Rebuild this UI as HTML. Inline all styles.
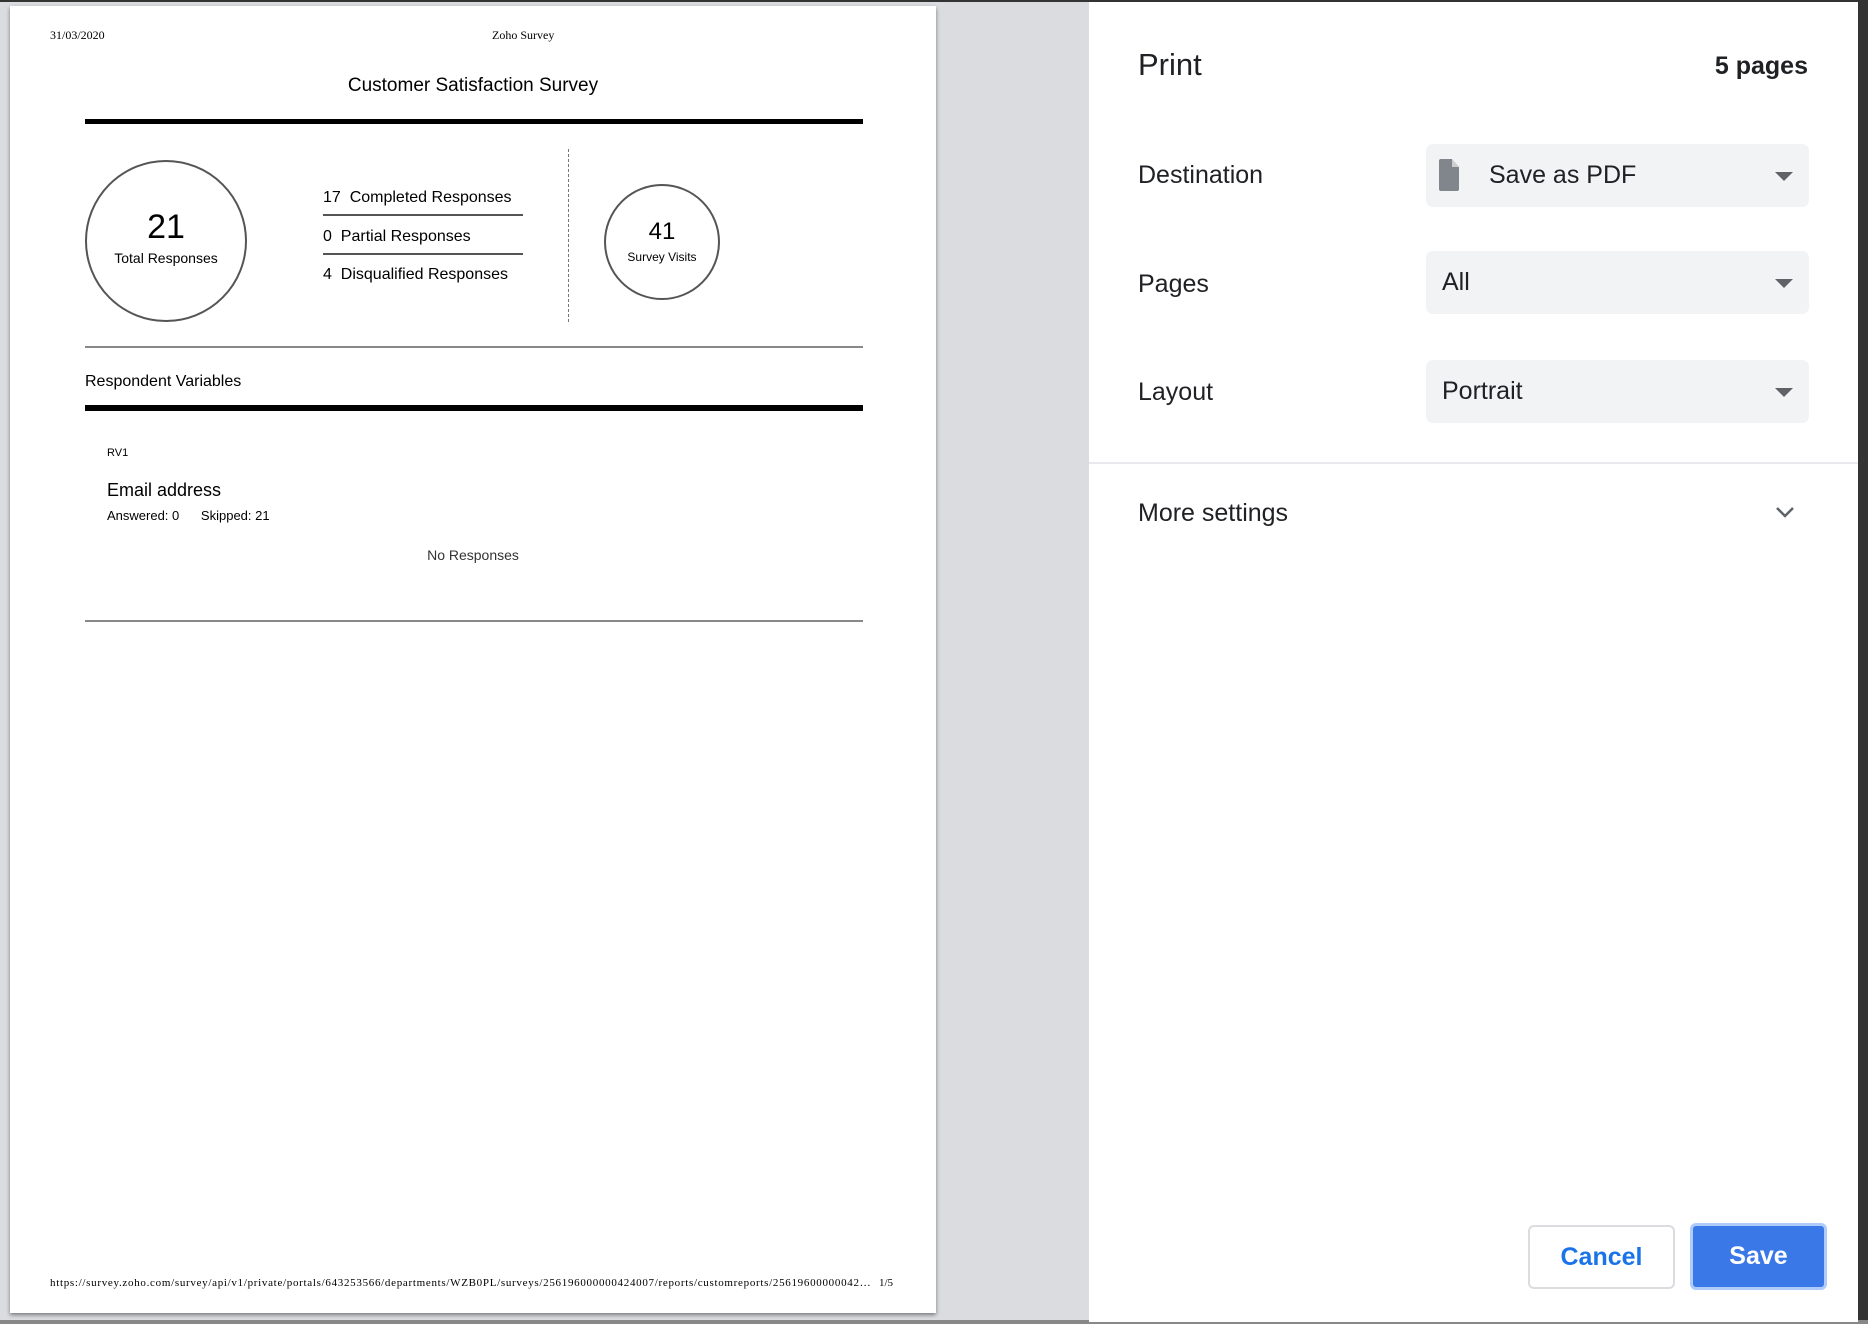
<!DOCTYPE html>
<html><head><meta charset="utf-8"><style>
*{margin:0;padding:0;box-sizing:border-box}
body{width:1868px;height:1324px;overflow:hidden;background:#dadce0;position:relative;font-family:"Liberation Sans",sans-serif}
.a{position:absolute;white-space:nowrap}
.page{position:absolute;left:10px;top:6px;width:926px;height:1307px;background:#fff;box-shadow:0 2px 4px rgba(0,0,0,.45)}
.serif{font-family:"Liberation Serif",serif}
.panel{position:absolute;left:1089px;top:2px;width:769px;height:1320px;background:#fff;color:#202124}
.lbl{font-size:25px;left:49px}
.sel{position:absolute;left:337px;width:383px;height:63px;background:#f1f3f4;border-radius:7px;font-size:25px}
.sel .t{position:absolute;top:17px}
.tri{position:absolute;right:16px;top:28px;width:0;height:0;border-left:9px solid transparent;border-right:9px solid transparent;border-top:9px solid #5f6368}
.circ{position:absolute;border:2px solid #555;border-radius:50%;text-align:center}
</style></head><body>
<div class="a" style="left:0;top:0;width:1868px;height:2px;background:#333"></div>
<div class="a" style="left:1858px;top:0;width:10px;height:1324px;background:#333"></div>
<div class="a" style="left:0;top:1320px;width:1868px;height:4px;background:#888"></div>
<div class="page">
 <div class="a serif" style="left:40px;top:22px;font-size:12px">31/03/2020</div>
 <div class="a serif" style="left:482px;top:22px;font-size:12px">Zoho Survey</div>
 <div class="a" style="left:0;width:926px;text-align:center;top:69px;font-size:19px">Customer Satisfaction Survey</div>
 <div class="a" style="left:75px;top:113px;width:778px;height:5px;background:#000"></div>
 <div class="circ" style="left:75px;top:154px;width:162px;height:162px"><div style="font-size:34px;margin-top:46px">21</div><div style="font-size:14px;margin-top:3px">Total Responses</div></div>
 <div class="a" style="left:313px;top:183px;font-size:16px">17&nbsp; Completed Responses</div>
 <div class="a" style="left:313px;top:208px;width:200px;height:2px;background:#555"></div>
 <div class="a" style="left:313px;top:222px;font-size:16px">0&nbsp; Partial Responses</div>
 <div class="a" style="left:313px;top:247px;width:200px;height:2px;background:#555"></div>
 <div class="a" style="left:313px;top:260px;font-size:16px">4&nbsp; Disqualified Responses</div>
 <div class="a" style="left:558px;top:143px;height:173px;border-left:1px dashed #777"></div>
 <div class="circ" style="left:594px;top:178px;width:116px;height:116px"><div style="font-size:24px;margin-top:32px">41</div><div style="font-size:12px;margin-top:4px">Survey Visits</div></div>
 <div class="a" style="left:75px;top:340px;width:778px;height:2px;background:#888"></div>
 <div class="a" style="left:75px;top:367px;font-size:16px">Respondent Variables</div>
 <div class="a" style="left:75px;top:399px;width:778px;height:6px;background:#000"></div>
 <div class="a" style="left:97px;top:441px;font-size:11px">RV1</div>
 <div class="a" style="left:97px;top:474px;font-size:18px">Email address</div>
 <div class="a" style="left:97px;top:502px;font-size:13px">Answered: 0 &nbsp;&nbsp;&nbsp;&nbsp; Skipped: 21</div>
 <div class="a" style="left:0;width:926px;text-align:center;top:541px;font-size:14px;color:#333">No Responses</div>
 <div class="a" style="left:75px;top:614px;width:778px;height:2px;background:#888"></div>
 <div class="a serif" style="left:40px;top:1271px;font-size:11px;letter-spacing:0.7px">https://survey.zoho.com/survey/api/v1/private/portals/643253566/departments/WZB0PL/surveys/256196000000424007/reports/customreports/25619600000042…</div>
 <div class="a serif" style="left:869px;top:1271px;font-size:11px">1/5</div>
</div>
<div class="panel">
 <div class="a" style="left:49px;top:45px;font-size:31px">Print</div>
 <div class="a" style="right:50px;top:50px;font-size:25px;font-weight:bold">5 pages</div>
 <div class="a lbl" style="top:159px">Destination</div>
 <div class="sel" style="top:142px"><svg style="position:absolute;left:13px;top:15px" width="20" height="32" viewBox="0 0 20 32"><path d="M2 0h11l7 8v22a2 2 0 0 1-2 2H2a2 2 0 0 1-2-2V2a2 2 0 0 1 2-2z" fill="#80868b"/><path d="M13 0v8h7z" fill="#fff" opacity=".6"/></svg><span class="t" style="left:63px">Save as PDF</span><div class="tri"></div></div>
 <div class="a lbl" style="top:268px">Pages</div>
 <div class="sel" style="top:249px"><span class="t" style="left:16px">All</span><div class="tri"></div></div>
 <div class="a lbl" style="top:376px">Layout</div>
 <div class="sel" style="top:358px"><span class="t" style="left:16px">Portrait</span><div class="tri"></div></div>
 <div class="a" style="left:0;top:460px;width:769px;height:2px;background:#e8eaed"></div>
 <div class="a lbl" style="top:497px">More settings</div>
 <svg class="a" style="left:686px;top:504px" width="20" height="14" viewBox="0 0 20 14"><path d="M2 2l8 8 8-8" fill="none" stroke="#5f6368" stroke-width="2.5"/></svg>
 <div class="a" style="left:439px;top:1223px;width:147px;height:64px;border:2px solid #dadce0;border-radius:6px;color:#1a73e8;font-size:25px;font-weight:bold;text-align:center;line-height:60px">Cancel</div>
 <div class="a" style="left:601px;top:1221px;width:137px;height:67px;background:#3b78e7;border:3px solid #aecbfa;border-radius:6px;color:#fff;font-size:25px;font-weight:bold;text-align:center;line-height:61px">Save</div>
</div>
</body></html>
